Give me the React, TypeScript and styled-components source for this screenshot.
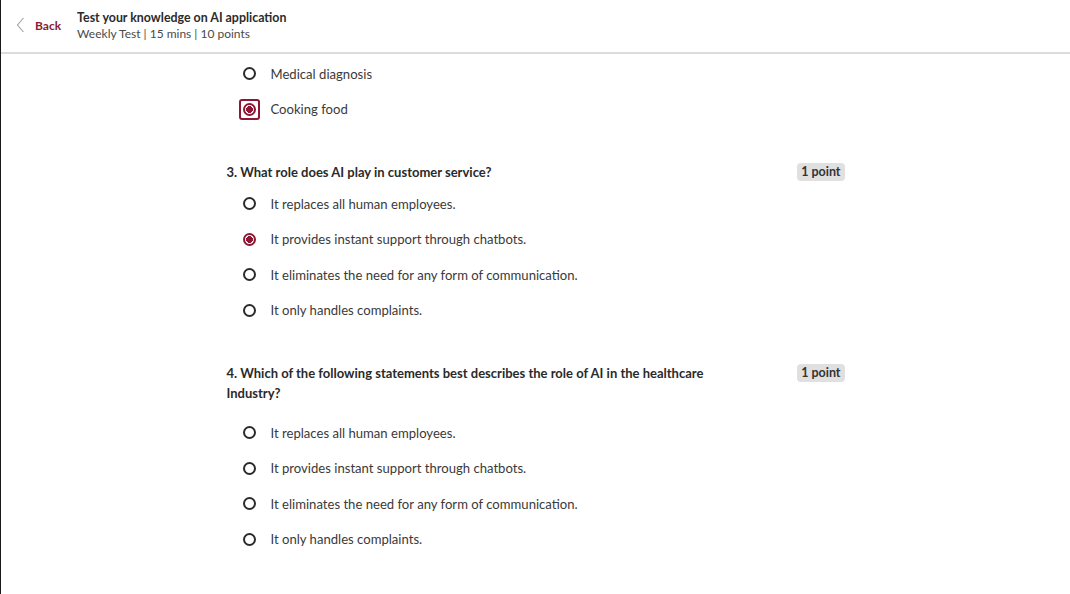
import React from "react";
import styled, { createGlobalStyle } from "styled-components";

const MAROON = "#8c1836";

const GlobalStyle = createGlobalStyle`
  html, body {
    margin: 0;
    padding: 0;
    background: #ffffff;
  }
  body {
    font-family: Lato, "Liberation Sans", sans-serif;
    color: #2e2e2e;
  }
`;

type Option = { label: string; selected?: boolean; focused?: boolean };
type Question = {
  number?: number;
  title?: string;
  points?: string;
  gap: number;
  options: Option[];
};

const questions: Question[] = [
  {
    gap: 0,
    options: [
      { label: "Medical diagnosis" },
      { label: "Cooking food", selected: true, focused: true },
    ],
  },
  {
    number: 3,
    title: "What role does AI play in customer service?",
    points: "1 point",
    gap: 4,
    options: [
      { label: "It replaces all human employees." },
      { label: "It provides instant support through chatbots.", selected: true },
      { label: "It eliminates the need for any form of communication." },
      { label: "It only handles complaints." },
    ],
  },
  {
    number: 4,
    title:
      "Which of the following statements best describes the role of AI in the healthcare Industry?",
    points: "1 point",
    gap: 12,
    options: [
      { label: "It replaces all human employees." },
      { label: "It provides instant support through chatbots." },
      { label: "It eliminates the need for any form of communication." },
      { label: "It only handles complaints." },
    ],
  },
];

const App = () => {
  return (
    <Page>
      <GlobalStyle />
      <Header>
        <BackButton>
          <svg width="9" height="16" viewBox="0 0 9 16" fill="none">
            <path d="M7.5 1 L1.5 8 L7.5 15" stroke="#a0a0a0" strokeWidth="1.1" />
          </svg>
          <BackLabel>Back</BackLabel>
        </BackButton>
        <HeaderText>
          <TestTitle>Test your knowledge on AI application</TestTitle>
          <TestMeta>Weekly Test | 15 mins | 10 points</TestMeta>
        </HeaderText>
      </Header>

      <Content>
        {questions.map((q, i) => (
          <QuestionBlock key={i}>
            {q.title && (
              <QuestionHead>
                <QuestionTitle>{`${q.number}. ${q.title}`}</QuestionTitle>
                <PointBadge>{q.points}</PointBadge>
              </QuestionHead>
            )}
            <OptionList $gap={q.gap}>
              {q.options.map((o) => (
                <OptionRow key={o.label}>
                  <FocusRing $focused={!!o.focused}>
                    <Radio $selected={!!o.selected} />
                  </FocusRing>
                  <OptionLabel>{o.label}</OptionLabel>
                </OptionRow>
              ))}
            </OptionList>
          </QuestionBlock>
        ))}
      </Content>
    </Page>
  );
};

export default App;

const Page = styled.div`
  min-height: 100vh;
  box-sizing: border-box;
  border-left: 1px solid #1a1a1a;
`;

const Header = styled.header`
  height: 52px;
  display: flex;
  align-items: center;
  gap: 16px;
  padding-left: 15px;
  border-bottom: 2px solid #dcdcdc;
`;

const BackButton = styled.div`
  display: flex;
  align-items: center;
  gap: 10px;
  margin-bottom: 2px;
`;

const BackLabel = styled.span`
  font-size: 12px;
  font-weight: 700;
  color: ${MAROON};
`;

const HeaderText = styled.div`
  display: flex;
  flex-direction: column;
  gap: 1px;
  margin-bottom: 2px;
`;

const TestTitle = styled.div`
  font-size: 12.4px;
  font-weight: 700;
  line-height: 15px;
  color: #2b2b2b;
`;

const TestMeta = styled.div`
  font-size: 12px;
  line-height: 15px;
  color: #4a4a4a;
`;

const Content = styled.main`
  max-width: 618px;
  margin: 0 auto;
  padding-top: 2px;
  display: flex;
  flex-direction: column;
  gap: 35px;
`;

const QuestionBlock = styled.section`
  display: flex;
  flex-direction: column;
`;

const QuestionHead = styled.div`
  display: flex;
  align-items: flex-start;
  justify-content: space-between;
  gap: 90px;
`;

const QuestionTitle = styled.div`
  font-size: 13px;
  font-weight: 700;
  line-height: 20px;
  color: #2a2a2a;
  max-width: 500px;
`;

const PointBadge = styled.span`
  flex-shrink: 0;
  font-size: 12.5px;
  font-weight: 700;
  line-height: 18px;
  padding: 0 4px;
  margin-top: 1px;
  border-radius: 4px;
  background: #e0e0e0;
  color: #333333;
`;

const OptionList = styled.div<{ $gap: number }>`
  display: flex;
  flex-direction: column;
  margin-top: ${(p) => p.$gap}px;
`;

const OptionRow = styled.label`
  height: 35.5px;
  display: flex;
  align-items: center;
  gap: 11px;
  padding-left: 12px;
`;

const FocusRing = styled.span<{ $focused: boolean }>`
  width: 21px;
  height: 21px;
  box-sizing: border-box;
  display: flex;
  align-items: center;
  justify-content: center;
  border-radius: 3px;
  border: 2px solid ${(p) => (p.$focused ? MAROON : "transparent")};
`;

const Radio = styled.span<{ $selected: boolean }>`
  width: 13px;
  height: 13px;
  box-sizing: border-box;
  border-radius: 50%;
  border: 2px solid ${(p) => (p.$selected ? MAROON : "#2b2b2b")};
  background: ${(p) =>
    p.$selected ? `radial-gradient(circle, ${MAROON} 0 3.2px, #fff 3.6px)` : "#fff"};
`;

const OptionLabel = styled.span`
  font-size: 13.1px;
  color: #3a3a3a;
`;
